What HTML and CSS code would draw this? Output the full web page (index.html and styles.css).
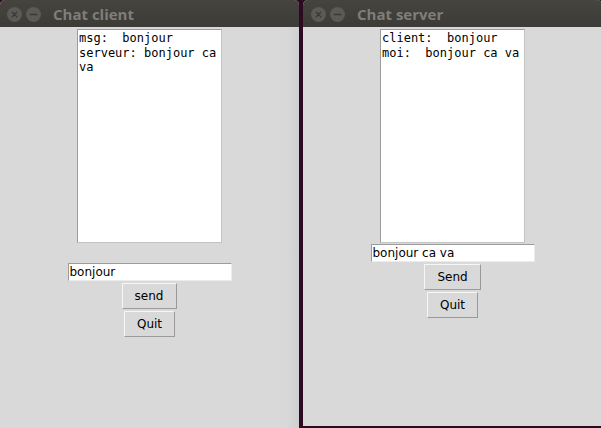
FILE: index.html
```html
<!DOCTYPE html>
<html>
<head>
<meta charset="utf-8">
<link rel="stylesheet" href="styles.css">
</head>
<body>
<div class="desk">
  <div class="win win-left">
    <div class="titlebar">
      <span class="tb-btn"><svg width="15" height="15" viewBox="0 0 15 15"><circle cx="7.5" cy="7.5" r="7.5" fill="#5b5a56"/><path d="M5.3 5.3 L9.7 9.7 M9.7 5.3 L5.3 9.7" stroke="#3a3935" stroke-width="1.4" stroke-linecap="round"/></svg></span>
      <span class="tb-btn"><svg width="15" height="15" viewBox="0 0 15 15"><circle cx="7.5" cy="7.5" r="7.5" fill="#5b5a56"/><path d="M4.3 7.5 H10.7" stroke="#3a3935" stroke-width="1.5" stroke-linecap="round"/></svg></span>
      <span class="title">Chat client</span>
    </div>
    <div class="content content-left">
      <div class="textbox">
        <div class="line">msg:  bonjour</div>
        <div class="line">serveur: bonjour ca</div>
        <div class="line">va</div>
      </div>
      <div class="entry entry-left">bonjour</div>
      <div class="button btn-send">send</div>
      <div class="button btn-quit">Quit</div>
    </div>
  </div>
  <div class="gap"></div>
  <div class="win win-right">
    <div class="titlebar titlebar-right">
      <span class="tb-btn"><svg width="15" height="15" viewBox="0 0 15 15"><circle cx="7.5" cy="7.5" r="7.5" fill="#5b5a56"/><path d="M5.3 5.3 L9.7 9.7 M9.7 5.3 L5.3 9.7" stroke="#3a3935" stroke-width="1.4" stroke-linecap="round"/></svg></span>
      <span class="tb-btn"><svg width="15" height="15" viewBox="0 0 15 15"><circle cx="7.5" cy="7.5" r="7.5" fill="#5b5a56"/><path d="M4.3 7.5 H10.7" stroke="#3a3935" stroke-width="1.5" stroke-linecap="round"/></svg></span>
      <span class="title">Chat server</span>
    </div>
    <div class="content">
      <div class="textbox">
        <div class="line">client:  bonjour</div>
        <div class="line">moi:  bonjour ca va</div>
      </div>
      <div class="entry entry-right">bonjour ca va</div>
      <div class="button btn-send2">Send</div>
      <div class="button btn-quit">Quit</div>
    </div>
  </div>
</div>
</body>
</html>
```

FILE: styles.css
```css
html, body {
  margin: 0;
  padding: 0;
  width: 601px;
  height: 428px;
  overflow: hidden;
  background: #2c0a22;
}
.desk {
  display: flex;
  align-items: flex-start;
  width: 601px;
  height: 428px;
  overflow: hidden;
}
.win {
  display: flex;
  flex-direction: column;
  flex-shrink: 0;
  background: #d9d9d9;
  border-radius: 5px 5px 0 0;
  overflow: hidden;
}
.win-left {
  width: 299px;
  height: 428px;
  background: linear-gradient(to right, #d9d9d9 0, #d9d9d9 286px, #cfcfcf 299px);
}
.gap {
  width: 4px;
  flex-shrink: 0;
}
.win-right {
  width: 299px;
  height: 426px;
}
.titlebar {
  height: 27px;
  display: flex;
  align-items: center;
  padding-left: 7px;
  padding-top: 1px;
  box-sizing: border-box;
  background: linear-gradient(to bottom, #45443f, #3c3b37);
}
.titlebar-right {
  padding-left: 8px;
}
.tb-btn {
  width: 15px;
  height: 15px;
  margin-right: 4px;
  display: flex;
}
.tb-btn svg {
  display: block;
}
.title {
  margin-left: 8px;
  font-family: "Open Sans", "DejaVu Sans", sans-serif;
  font-weight: 700;
  font-size: 15px;
  color: #7f7e79;
  line-height: 20px;
}
.content {
  display: flex;
  flex-direction: column;
  align-items: center;
}
.textbox {
  margin-top: 2px;
  width: 145px;
  height: 214px;
  box-sizing: border-box;
  background: #ffffff;
  border: 1px solid;
  border-color: #9c9c9c #c4c4c4 #c4c4c4 #9c9c9c;
  padding: 1px 1px;
  font-family: "DejaVu Sans Mono", monospace;
  font-size: 12px;
  line-height: 14.5px;
  color: #000;
}
.line {
  white-space: pre;
}
.entry {
  width: 164px;
  height: 18px;
  box-sizing: border-box;
  background: #ffffff;
  border: 1px solid;
  border-color: #9c9c9c #ececec #ececec #9c9c9c;
  padding: 0 1px;
  font-family: "DejaVu Sans", sans-serif;
  font-size: 12px;
  line-height: 16px;
  color: #000;
  white-space: pre;
}
.entry-left {
  margin-top: 20px;
}
.entry-right {
  margin-top: 1px;
}
.button {
  margin-top: 2px;
  height: 26px;
  box-sizing: border-box;
  border: 1px solid;
  border-color: #f6f6f6 #9a9a9a #9a9a9a #f6f6f6;
  background: #d9d9d9;
  display: flex;
  align-items: center;
  justify-content: center;
  font-family: "DejaVu Sans", sans-serif;
  font-size: 12px;
  color: #000;
}
.btn-send {
  width: 55px;
  margin-left: -1px;
}
.btn-send2 {
  width: 57px;
}
.btn-quit {
  width: 51px;
}
```
